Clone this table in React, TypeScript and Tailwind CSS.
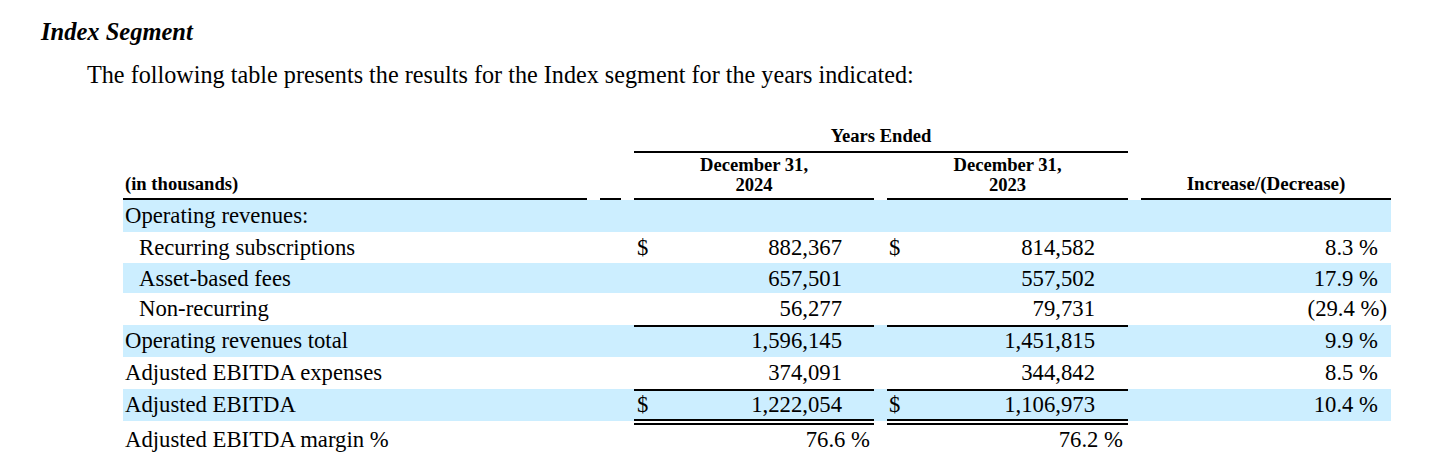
import React from "react";

type Row = {
  label: string;
  blue?: boolean;
  indent?: boolean;
  d1?: boolean;
  v1?: string;
  d2?: boolean;
  v2?: string;
  p?: string;
  neg?: boolean;
  h: string;
  line?: "top" | "both";
};

const rows: Row[] = [
  { label: "Operating revenues:", blue: true, h: "h-[32px]" },
  { label: "Recurring subscriptions", indent: true, d1: true, v1: "882,367", d2: true, v2: "814,582", p: "8.3 %", h: "h-[31px]" },
  { label: "Asset-based fees", blue: true, indent: true, v1: "657,501", v2: "557,502", p: "17.9 %", h: "h-[30px]" },
  { label: "Non-recurring", indent: true, v1: "56,277", v2: "79,731", p: "(29.4 %)", neg: true, h: "h-[32px]" },
  { label: "Operating revenues total", blue: true, v1: "1,596,145", v2: "1,451,815", p: "9.9 %", h: "h-[32px]", line: "top" },
  { label: "Adjusted EBITDA expenses", v1: "374,091", v2: "344,842", p: "8.5 %", h: "h-[32px]" },
  { label: "Adjusted EBITDA", blue: true, d1: true, v1: "1,222,054", d2: true, v2: "1,106,973", p: "10.4 %", h: "h-[32px]", line: "both" },
];

export default function App() {
  return (
    <div className="w-[1456px] h-[476px] bg-white text-black overflow-hidden" style={{ fontFamily: '"Liberation Serif", "Times New Roman", serif' }}>
      <div className="pt-[18px] pl-[41px] text-[24.5px] leading-[28px] font-bold italic">Index Segment</div>
      <div className="mt-[15px] pl-[87px] text-[24.2px] leading-[28px]">
        The following table presents the results for the Index segment for the years indicated:
      </div>

      {/* header */}
      <div className="mt-[37px] ml-[123px] w-[1268px] flex items-end gap-[13px] text-[18.6px] font-bold">
        <div className="w-[464px] border-b-2 border-black pl-[2px] pb-[4px] leading-[20px]">(in thousands)</div>
        <div className="w-[21px] border-b-2 border-black"></div>
        <div className="w-[494px] flex flex-col">
          <div className="text-center leading-[20px] pb-[5px] border-b-2 border-black">Years Ended</div>
          <div className="flex gap-[13px] pt-[2px]">
            <div className="w-[240px] text-center leading-[20px] pb-[3px] border-b-2 border-black">
              December 31,
              <br />
              2024
            </div>
            <div className="w-[241px] text-center leading-[20px] pb-[3px] border-b-2 border-black">
              December 31,
              <br />
              2023
            </div>
          </div>
        </div>
        <div className="w-[250px] text-center border-b-2 border-black pb-[4px] leading-[20px]">
          <span className="text-[19px]">Increase/(Decrease)</span>
        </div>
      </div>

      {/* body */}
      <div className="ml-[123px] w-[1268px] text-[22.7px]">
        {rows.map((r, i) => {
          const shadow =
            r.line === "top"
              ? "shadow-[inset_0_2px_0_#000]"
              : r.line === "both"
              ? "shadow-[inset_0_2px_0_#000,inset_0_-2px_0_#000]"
              : "";
          return (
            <div key={i} className={`flex gap-[13px] leading-[32px] ${r.h} ${r.blue ? "bg-[#cceeff]" : "bg-white"}`}>
              <div className={`w-[464px] whitespace-nowrap ${r.indent ? "pl-[16px]" : "pl-[2px]"}`}>{r.label}</div>
              <div className="w-[21px]"></div>
              <div className={`w-[240px] flex justify-between pl-[3px] pr-[32px] ${shadow}`}>
                <span>{r.d1 ? "$" : ""}</span>
                <span>{r.v1 ?? ""}</span>
              </div>
              <div className={`w-[241px] flex justify-between pl-[2px] pr-[33px] ${shadow}`}>
                <span>{r.d2 ? "$" : ""}</span>
                <span>{r.v2 ?? ""}</span>
              </div>
              <div className={`w-[250px] text-right ${r.neg ? "pr-[4px]" : "pr-[13px]"}`}>{r.p ?? ""}</div>
            </div>
          );
        })}
        <div className="flex gap-[13px] pt-[2px] leading-[34px] bg-white">
          <div className="w-[464px] pl-[2px]">Adjusted EBITDA margin %</div>
          <div className="w-[21px]"></div>
          <div className="w-[240px] text-right pr-[4px] shadow-[inset_0_2px_0_#000]">76.6 %</div>
          <div className="w-[241px] text-right pr-[5px] shadow-[inset_0_2px_0_#000]">76.2 %</div>
          <div className="w-[250px]"></div>
        </div>
      </div>
    </div>
  );
}
